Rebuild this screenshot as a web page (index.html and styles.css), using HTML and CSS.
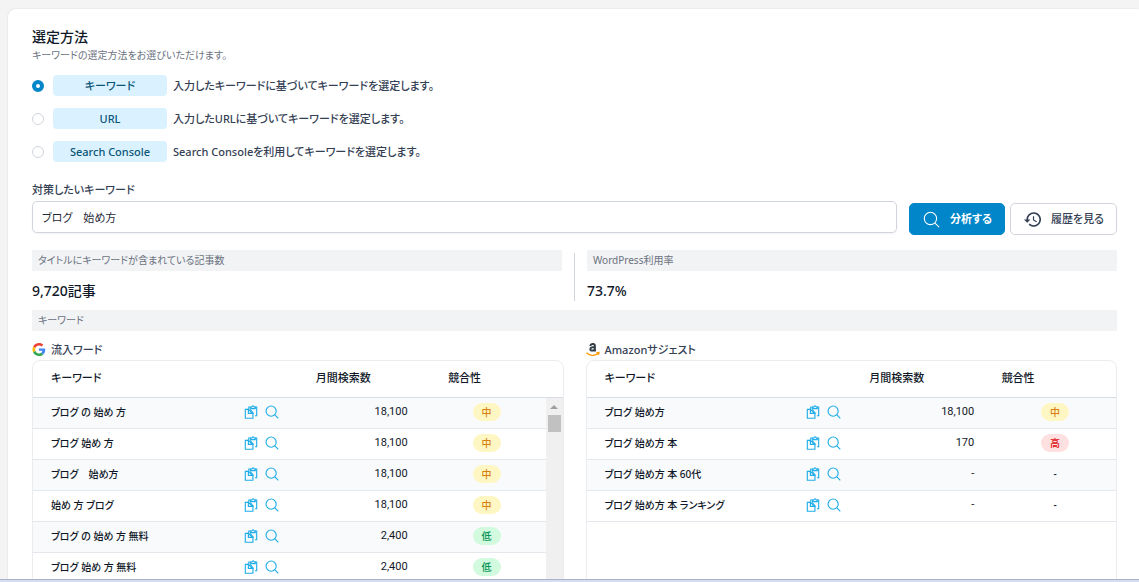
FILE: index.html
```
<!DOCTYPE html>
<html lang="ja">
<head>
<meta charset="utf-8">
<title>キーワード選定</title>
<link rel="stylesheet" href="styles.css">
</head>
<body>
<svg class="defs" aria-hidden="true">
  <symbol id="search" viewBox="0 0 16 16"><circle cx="7" cy="7" r="5.800"/><path d="M11.300 11.300l3.900 3.900"/></symbol>
  <symbol id="copy" viewBox="0 0 16 16"><path d="M5 5H1.500v10.200h8.700V10L5 5v4.600h5"/><path d="M5.500 5V2.300h2.300M12.300 2.300h2.200v10h-2"/><path d="M7.600 4.200V2.400l1.400-.2c.4-1.700 2.300-1.700 2.700 0l1.200.2v1.800z"/><path d="M7 5l4 4.800"/></symbol>
</svg>
<div class="app">
<main class="card">
  <section class="method">
    <h1 class="title">選定方法</h1>
    <p class="subtitle">キーワードの選定方法をお選びいただけます。</p>
    <div class="options">
      <label class="option"><input class="radio" type="radio" name="method" checked><span class="tag">キーワード</span><span>入力したキーワードに基づいてキーワードを選定します。</span></label>
      <label class="option"><input class="radio" type="radio" name="method"><span class="tag">URL</span><span>入力したURLに基づいてキーワードを選定します。</span></label>
      <label class="option"><input class="radio" type="radio" name="method"><span class="tag">Search Console</span><span>Search Consoleを利用してキーワードを選定します。</span></label>
    </div>
  </section>

  <form class="form">
    <div class="field">
      <label class="label" for="kw">対策したいキーワード</label>
      <input class="input" id="kw" type="text" value="ブログ　始め方">
    </div>
    <div class="actions">
      <button class="btn primary" type="button"><svg class="btn-icon"><use href="#search"/></svg>分析する</button>
      <button class="btn" type="button"><svg class="btn-icon history" viewBox="1 2 21 20"><path d="M13 3a9 9 0 0 0-9 9H1l3.900 3.900.1.1L9 12H6a7 7 0 1 1 7 7 6.900 6.900 0 0 1-4.900-2.100l-1.400 1.500A9 9 0 1 0 13 3zm-1 5v5l4.200 2.500.8-1.300-3.500-2V8z"/></svg>履歴を見る</button>
    </div>
  </form>

  <section class="stats">
    <div class="stat"><h2 class="bar">タイトルにキーワードが含まれている記事数</h2><p class="value">9,720記事</p></div>
    <div class="divider"></div>
    <div class="stat"><h2 class="bar">WordPress利用率</h2><p class="value">73.7%</p></div>
  </section>

  <h2 class="bar">キーワード</h2>

  <section class="lists">
    <div class="list">
      <h3 class="list-title"><svg class="brand" viewBox="0 0 48 48"><path fill="#ea4335" d="M24 9.500c3.500 0 6.700 1.200 9.200 3.600l6.900-6.900C35.900 2.400 30.500 0 24 0 14.600 0 6.500 5.400 2.600 13.200l8 6.200C12.400 13.700 17.700 9.500 24 9.500z"/><path fill="#4285f4" d="M47 24.500c0-1.600-.2-3.100-.4-4.500H24v9h12.900c-.6 3-2.200 5.500-4.700 7.200l7.700 6C44.400 38 47 31.800 47 24.500z"/><path fill="#fbbc05" d="M10.500 28.600a14.500 14.500 0 0 1 0-9.200l-8-6.200a24 24 0 0 0 0 21.600z"/><path fill="#34a853" d="M24 48c6.500 0 11.900-2.100 15.900-5.800l-7.700-6c-2.200 1.400-4.900 2.300-8.200 2.300-6.300 0-11.600-4.200-13.500-9.900l-8 6.200C6.500 42.600 14.600 48 24 48z"/></svg>流入ワード</h3>
      <div class="panel">
        <table class="head"><thead><tr><th>キーワード</th><th>月間検索数</th><th>競合性</th></tr></thead></table>
        <div class="scroll">
          <table class="rows"><tbody>
            <tr><td><div class="kw">ブログ の 始め 方<span class="tools"><svg><use href="#copy"/></svg><svg><use href="#search"/></svg></span></div></td><td>18,100</td><td><span class="pill mid">中</span></td></tr>
            <tr><td><div class="kw">ブログ 始め 方<span class="tools"><svg><use href="#copy"/></svg><svg><use href="#search"/></svg></span></div></td><td>18,100</td><td><span class="pill mid">中</span></td></tr>
            <tr><td><div class="kw">ブログ　始め方<span class="tools"><svg><use href="#copy"/></svg><svg><use href="#search"/></svg></span></div></td><td>18,100</td><td><span class="pill mid">中</span></td></tr>
            <tr><td><div class="kw">始め 方 ブログ<span class="tools"><svg><use href="#copy"/></svg><svg><use href="#search"/></svg></span></div></td><td>18,100</td><td><span class="pill mid">中</span></td></tr>
            <tr><td><div class="kw">ブログ の 始め 方 無料<span class="tools"><svg><use href="#copy"/></svg><svg><use href="#search"/></svg></span></div></td><td>2,400</td><td><span class="pill low">低</span></td></tr>
            <tr><td><div class="kw">ブログ 始め 方 無料<span class="tools"><svg><use href="#copy"/></svg><svg><use href="#search"/></svg></span></div></td><td>2,400</td><td><span class="pill low">低</span></td></tr>
          </tbody></table>
          <div class="track"><span class="arrow"></span><span class="thumb"></span></div>
        </div>
      </div>
    </div>
    <div class="list">
      <h3 class="list-title"><svg class="brand" viewBox="0 0 24 24"><path fill="none" stroke="#333e48" stroke-width="3.600" d="M7 5.500C7.500.5 15.500.5 15.500 5v7c0 1.500.6 2.300 1.500 3M15.500 7.500C10 7.500 7 8.500 7 11.500s7 4 8.500-1"/><path fill="none" stroke="#f90" stroke-width="2.400" d="M0 18c6 6 15 6 21 1.500M18.500 18l4.500-.5-1 4.500"/></svg>Amazonサジェスト</h3>
      <div class="panel">
        <table class="head"><thead><tr><th>キーワード</th><th>月間検索数</th><th>競合性</th></tr></thead></table>
        <div class="scroll">
          <table class="rows"><tbody>
            <tr><td><div class="kw">ブログ 始め方<span class="tools"><svg><use href="#copy"/></svg><svg><use href="#search"/></svg></span></div></td><td>18,100</td><td><span class="pill mid">中</span></td></tr>
            <tr><td><div class="kw">ブログ 始め方 本<span class="tools"><svg><use href="#copy"/></svg><svg><use href="#search"/></svg></span></div></td><td>170</td><td><span class="pill high">高</span></td></tr>
            <tr><td><div class="kw">ブログ 始め方 本 60代<span class="tools"><svg><use href="#copy"/></svg><svg><use href="#search"/></svg></span></div></td><td>-</td><td>-</td></tr>
            <tr><td><div class="kw">ブログ 始め方 本 ランキング<span class="tools"><svg><use href="#copy"/></svg><svg><use href="#search"/></svg></span></div></td><td>-</td><td>-</td></tr>
          </tbody></table>
        </div>
      </div>
    </div>
  </section>
</main>
<div class="edge"></div>
</div>
</body>
</html>
```
FILE: styles.css
```
* { box-sizing: border-box; }
body {
  margin: 0;
  background: #f4f4f4;
  color: #101828;
  font-family: "Noto Sans", "Noto Sans CJK JP", sans-serif;
  font-feature-settings: "palt";
  font-size: 11px;
  line-height: 16px;
}
h1, h2, h3, p { margin: 0; font-weight: 400; }
button, input { font: inherit; font-feature-settings: inherit; }
.defs { position: absolute; width: 0; height: 0; }
.app { display: flex; flex-direction: column; height: 100vh; overflow: hidden; padding-top: 9px; }
.card {
  flex: 1;
  min-height: 0;
  display: flex;
  flex-direction: column;
  overflow: hidden;
  margin-left: 8px;
  padding: 18px 22px 0 24px;
  background: #fff;
  border-radius: 8px 0 0 0;
  box-shadow: 0 0 2px rgba(0, 0, 0, .12);
}
.card > * { flex-shrink: 0; }
.edge { height: 3px; background: #d5def0; border-top: 1px solid #a9b4c8; }

.title { font-size: 14px; line-height: 20px; font-weight: 500; }
.subtitle { font-size: 10px; color: #6b7280; }
.options { display: flex; flex-direction: column; gap: 12px; margin-top: 12px; }
.option { display: flex; align-items: center; color: #344054; font-weight: 500; line-height: 21px; }
.radio {
  appearance: none;
  width: 12px;
  height: 12px;
  margin: 0 9px 0 0;
  border: 1px solid #d0d5dd;
  border-radius: 50%;
  background: #fff;
}
.radio:checked { border: 4px solid #0086c9; }
.tag {
  width: 114px;
  margin-right: 6px;
  border-radius: 4px;
  background: #daf2ff;
  color: #0b5578;
  text-align: center;
}

.form { display: flex; align-items: flex-end; gap: 12px; margin-top: 20px; }
.field { flex: 1; display: flex; flex-direction: column; gap: 3px; padding-bottom: 2px; }
.label { color: #344054; font-weight: 500; }
.input {
  width: 100%;
  height: 32px;
  padding: 0 9px;
  border: 1px solid #d0d5dd;
  border-radius: 5px;
  background: #fff;
  color: #1f2937;
  box-shadow: 0 1px 2px rgba(16, 24, 40, .05);
}
.actions { display: flex; gap: 5px; }
.btn {
  display: flex;
  align-items: center;
  gap: 10px;
  height: 32px;
  padding: 0 12px 0 13px;
  border: 1px solid #d0d5dd;
  border-radius: 5px;
  background: #fff;
  color: #344054;
  font-weight: 500;
  white-space: nowrap;
}
.primary { border-color: #0086c9; background: #0086c9; color: #fff; font-weight: 700; }
.btn-icon { width: 17px; height: 17px; fill: none; stroke: currentColor; stroke-width: 1; }
.history { fill: currentColor; stroke: none; }

.stats { display: grid; grid-template-columns: 1fr 1px 1fr; gap: 12px; margin-top: 15px; }
.divider { margin-top: 3px; background: #d0d5dd; }
.bar { padding: 0 6px; background: #f2f3f5; color: #6b7280; font-size: 10px; line-height: 21px; }
.value { padding-top: 9px; font-size: 14px; line-height: 21px; font-weight: 500; }
.stats + .bar { margin-top: 9px; }

.lists { display: grid; grid-template-columns: 1fr 1fr; gap: 22px; margin-top: 11px; }
.list { display: flex; flex-direction: column; gap: 3px; }
.list-title { display: flex; align-items: center; gap: 5px; color: #344054; font-size: 11px; font-weight: 500; line-height: 15px; }
.brand { width: 14px; height: 13px; }
.panel { flex: 1; border: 1px solid #eaecf0; border-radius: 8px; overflow: hidden; min-height: 260px; }
table { width: 100%; border-spacing: 0; table-layout: fixed; font-weight: 500; }
.head th { height: 37px; padding: 0 18px 2px; border-bottom: 1px solid #d8dce4; text-align: left; font-weight: 500; }
.head th:nth-child(1) { width: 50%; }
.scroll { display: flex; }
.rows td { height: 31px; padding: 0 18px 2px; border-bottom: 1px solid #e4e7ec; font-size: 10px; }
.rows tr:nth-child(odd) { background: #f9fafb; }
.rows td:nth-child(1) { width: 50%; padding-right: 10px; }
.rows td:nth-child(2) { width: 27%; padding-right: 20px; text-align: right; font-family: Roboto, sans-serif; font-size: 11px; font-weight: 400; }
.rows td:nth-child(3) { width: 23%; text-align: center; }
.kw { display: flex; align-items: center; justify-content: space-between; white-space: nowrap; }
.tools { display: flex; gap: 7px; }
.tools svg { width: 14px; height: 14px; fill: none; stroke: #20ade8; stroke-width: 1.3; }
.pill { display: inline-block; padding: 0 9px; border-radius: 9px; line-height: 18px; }
.mid { background: #fef7c3; color: #d97f10; }
.low { background: #d1fadf; color: #079455; }
.high { background: #fee0e0; color: #e01010; }
.track { flex: 0 0 17px; display: flex; flex-direction: column; align-items: center; gap: 6px; padding-top: 7px; background: #f0f0f0; }
.arrow { border: 4px solid transparent; border-top: 0; border-bottom-color: #a0a0a0; }
.thumb { width: 13px; height: 17px; background: #c1c1c1; }
```
